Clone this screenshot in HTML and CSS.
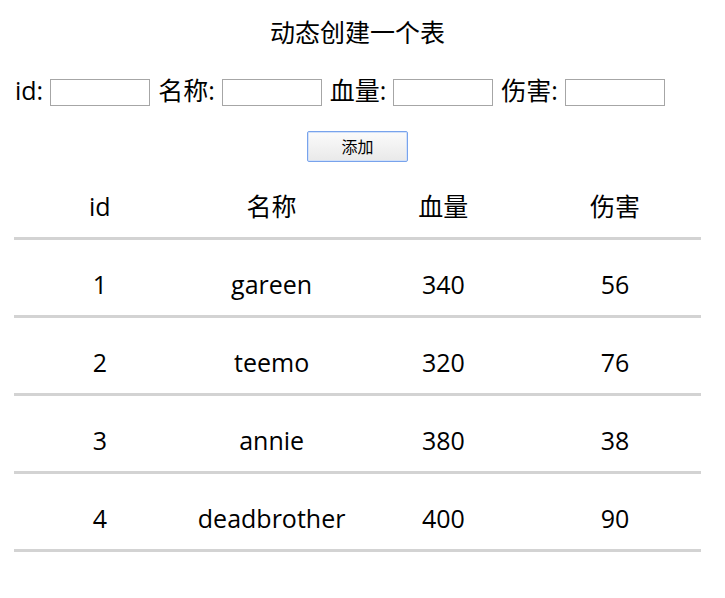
FILE: index.html
```html
<!DOCTYPE html>
<html lang="zh">
<head>
<meta charset="utf-8">
<title>动态创建一个表</title>
<link rel="stylesheet" href="styles.css">
</head>
<body>
<div class="page">
  <div class="title">动态创建一个表</div>
  <div class="form-row">
    <span class="label">id:</span><input class="field" type="text">
    <span class="label">名称:</span><input class="field" type="text">
    <span class="label">血量:</span><input class="field" type="text">
    <span class="label">伤害:</span><input class="field" type="text">
  </div>
  <div class="actions"><button class="add-btn" type="button">添加</button></div>
  <table class="data">
    <thead>
      <tr><th>id</th><th>名称</th><th>血量</th><th>伤害</th></tr>
    </thead>
    <tbody>
      <tr><td>1</td><td>gareen</td><td>340</td><td>56</td></tr>
      <tr><td>2</td><td>teemo</td><td>320</td><td>76</td></tr>
      <tr><td>3</td><td>annie</td><td>380</td><td>38</td></tr>
      <tr><td>4</td><td>deadbrother</td><td>400</td><td>90</td></tr>
    </tbody>
  </table>
</div>
</body>
</html>
```

FILE: styles.css
```css
html, body {
  margin: 0;
  padding: 0;
  background: #fff;
}

.page {
  width: 687px;
  margin-left: 14px;
  font-family: "Open Sans", "Noto Sans CJK SC", sans-serif;
  color: #000;
}

.title {
  font-size: 25px;
  line-height: 34px;
  text-align: center;
  padding-top: 15px;
}

.form-row {
  display: flex;
  align-items: center;
  height: 27px;
  margin-top: 30px;
  padding-left: 1px;
}

.label {
  font-size: 25px;
  line-height: 27px;
  margin-right: 7px;
  margin-bottom: 4px;
  white-space: nowrap;
}

.field {
  box-sizing: border-box;
  width: 100px;
  height: 27px;
  margin: 0 8px 0 0;
  padding: 0 2px;
  border: 1px solid #a6a6a6;
  background: #fff;
  font-size: 14px;
}

.actions {
  margin-top: 25px;
  text-align: center;
  height: 31px;
}

.add-btn {
  box-sizing: border-box;
  width: 101px;
  height: 31px;
  padding: 0;
  border: 1px solid #78a3ec;
  border-radius: 2px;
  box-shadow: inset 0 0 0 1px #d3e1f8;
  background: linear-gradient(#fbfbfb, #e9e9e9);
  font-family: "Noto Sans CJK SC", sans-serif;
  font-size: 16px;
  line-height: 29px;
  color: #000;
}

.data {
  width: 687px;
  border-collapse: collapse;
  table-layout: fixed;
  font-size: 25px;
  line-height: 34px;
}

.data th,
.data td {
  width: 25%;
  padding: 27px 0 14px;
  text-align: center;
  font-weight: normal;
  border-bottom: 3px solid #d3d3d3;
}
```
